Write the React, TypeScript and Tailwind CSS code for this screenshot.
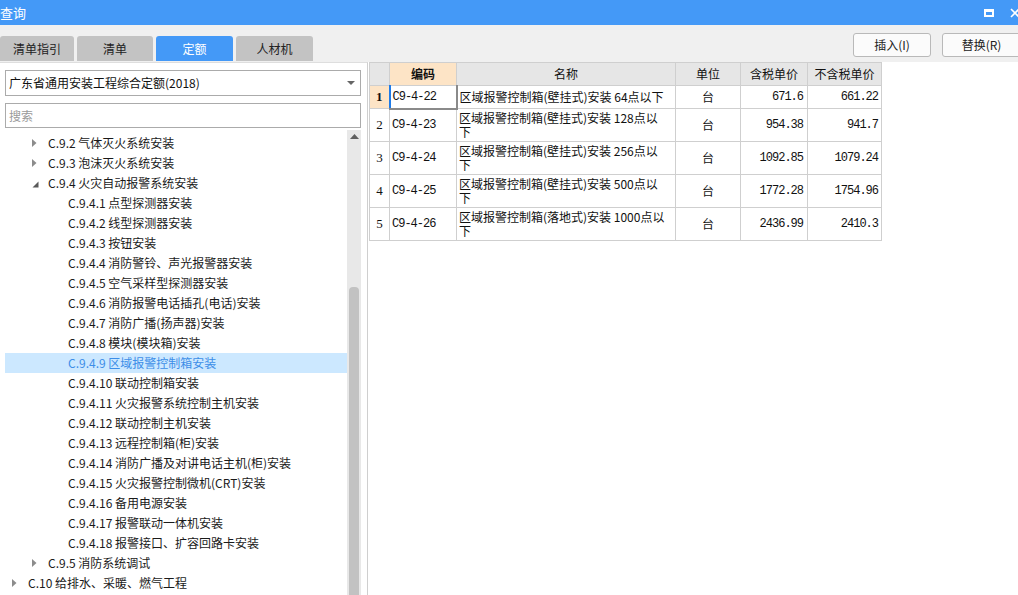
import React from "react";

const cjk = "font-['Noto_Sans_CJK_SC','Noto_Sans',sans-serif]";
const mono = "font-['Liberation_Mono','DejaVu_Sans_Mono',monospace]";

type Node = { depth: number; text: string; state?: "open" | "closed"; selected?: boolean };

const tree: Node[] = [
  { depth: 1, text: "C.9.2 气体灭火系统安装", state: "closed" },
  { depth: 1, text: "C.9.3 泡沫灭火系统安装", state: "closed" },
  { depth: 1, text: "C.9.4 火灾自动报警系统安装", state: "open" },
  { depth: 2, text: "C.9.4.1 点型探测器安装" },
  { depth: 2, text: "C.9.4.2 线型探测器安装" },
  { depth: 2, text: "C.9.4.3 按钮安装" },
  { depth: 2, text: "C.9.4.4 消防警铃、声光报警器安装" },
  { depth: 2, text: "C.9.4.5 空气采样型探测器安装" },
  { depth: 2, text: "C.9.4.6 消防报警电话插孔(电话)安装" },
  { depth: 2, text: "C.9.4.7 消防广播(扬声器)安装" },
  { depth: 2, text: "C.9.4.8 模块(模块箱)安装" },
  { depth: 2, text: "C.9.4.9 区域报警控制箱安装", selected: true },
  { depth: 2, text: "C.9.4.10 联动控制箱安装" },
  { depth: 2, text: "C.9.4.11 火灾报警系统控制主机安装" },
  { depth: 2, text: "C.9.4.12 联动控制主机安装" },
  { depth: 2, text: "C.9.4.13 远程控制箱(柜)安装" },
  { depth: 2, text: "C.9.4.14 消防广播及对讲电话主机(柜)安装" },
  { depth: 2, text: "C.9.4.15 火灾报警控制微机(CRT)安装" },
  { depth: 2, text: "C.9.4.16 备用电源安装" },
  { depth: 2, text: "C.9.4.17 报警联动一体机安装" },
  { depth: 2, text: "C.9.4.18 报警接口、扩容回路卡安装" },
  { depth: 1, text: "C.9.5 消防系统调试", state: "closed" },
  { depth: 0, text: "C.10 给排水、采暖、燃气工程", state: "closed" },
];

const rows = [
  { code: "C9-4-22", name: ["区域报警控制箱(壁挂式)安装 64点以下"], unit: "台", tax: "671.6", noTax: "661.22" },
  { code: "C9-4-23", name: ["区域报警控制箱(壁挂式)安装 128点以", "下"], unit: "台", tax: "954.38", noTax: "941.7" },
  { code: "C9-4-24", name: ["区域报警控制箱(壁挂式)安装 256点以", "下"], unit: "台", tax: "1092.85", noTax: "1079.24" },
  { code: "C9-4-25", name: ["区域报警控制箱(壁挂式)安装 500点以", "下"], unit: "台", tax: "1772.28", noTax: "1754.96" },
  { code: "C9-4-26", name: ["区域报警控制箱(落地式)安装 1000点以", "下"], unit: "台", tax: "2436.99", noTax: "2410.3" },
];

const tabs = [
  { label: "清单指引", w: "w-[74px]" },
  { label: "清单", w: "w-[76px]" },
  { label: "定额", w: "w-[77px]", active: true },
  { label: "人材机", w: "w-[77px]" },
];

function Toggle({ state }: { state?: "open" | "closed" }) {
  if (state === "closed")
    return (
      <svg width="6" height="8" viewBox="0 0 6 8" className="ml-[4px]">
        <path d="M0 0 L4.5 4 L0 8 Z" fill="#8c8c8c" />
      </svg>
    );
  if (state === "open")
    return (
      <svg width="7" height="7" viewBox="0 0 7 7" className="ml-[4px] mt-[3px]">
        <path d="M6.5 0.5 L6.5 6.5 L0.5 6.5 Z" fill="#5a5a5a" />
      </svg>
    );
  return null;
}

export default function App() {
  return (
    <div className={`flex h-[595px] w-[1018px] flex-col overflow-hidden bg-white ${cjk}`}>
      {/* title bar */}
      <div className="flex h-[25px] shrink-0 items-center justify-between bg-[#4499f7] text-white">
        <span className="text-[13px] leading-none">查询</span>
        <div className="flex items-center gap-[16px]">
          <div className="h-[8px] w-[10px] border-2 border-t-[3px] border-white" />
          <svg width="8" height="10" viewBox="0 0 8 10">
            <path d="M1 1 L9 9 M9 1 L1 9" stroke="white" strokeWidth="1.6" />
          </svg>
        </div>
      </div>

      {/* toolbar */}
      <div className="flex h-[37px] shrink-0 items-end justify-between bg-[#f0f0f0]">
        <div className="flex items-end gap-[3px] pb-[1px]">
          {tabs.map((t) => (
            <div
              key={t.label}
              className={`flex h-[25px] items-center justify-center rounded-t-[3px] text-[12px] ${t.w} ${
                t.active ? "bg-[#4499f7] text-white" : "bg-[#c3c3c3] text-[#222]"
              }`}
            >
              {t.label}
            </div>
          ))}
        </div>
        <div className="mb-[5px] mr-[-3px] flex gap-[11px] self-end">
          <button className="h-[24px] w-[78px] rounded-[3px] border border-[#b9b9b9] bg-[#fbfbfb] text-[12px] text-[#222]">
            插入(I)
          </button>
          <button className="h-[24px] w-[79px] rounded-[3px] border border-[#b9b9b9] bg-[#fbfbfb] text-[12px] text-[#222]">
            替换(R)
          </button>
        </div>
      </div>

      {/* body */}
      <div className="flex min-h-0 flex-1">
        {/* left panel */}
        <div className="flex w-[368px] shrink-0 flex-col border-r border-t border-[#cfcfcf] border-t-[#dedede] pl-[5px] pr-[6px] pt-[7px]">
          <div className="flex h-[26px] items-center justify-between border border-[#ababab] bg-white pl-[3px] pr-[5px]">
            <span className="text-[12px] text-[#111]">广东省通用安装工程综合定额(2018)</span>
            <svg width="8" height="4" viewBox="0 0 8 4">
              <path d="M0 0 L8 0 L4 4 Z" fill="#666" />
            </svg>
          </div>
          <div className="mt-[7px] flex h-[25px] items-center border border-[#ababab] bg-white pl-[3px]">
            <span className="text-[12px] text-[#9a9a9a]">搜索</span>
          </div>
          <div className="mt-[2px] flex min-h-0 flex-1">
            <div className="flex-1 pt-[3px]">
              {tree.map((n) => (
                <div
                  key={n.text}
                  className={`flex h-[20px] items-center text-[12px] ${
                    n.selected ? "bg-[#cce8ff] text-[#3d8ee8]" : "text-[#1a1a1a]"
                  }`}
                  style={{ paddingLeft: 3 + n.depth * 20 }}
                >
                  <div className="flex h-[20px] w-[20px] shrink-0 items-center">
                    <Toggle state={n.state} />
                  </div>
                  <span className="whitespace-nowrap">{n.text}</span>
                </div>
              ))}
            </div>
            {/* scrollbar */}
            <div className="flex w-[14px] flex-col items-center bg-[#e8e8e8]">
              <svg width="9" height="5" viewBox="0 0 9 5" className="mt-[4px]">
                <path d="M0 5 L4.5 0 L9 5 Z" fill="#606060" />
              </svg>
              <div className="mt-[148px] w-[10px] flex-1 rounded-t-[4px] bg-[#c2c2c2]" />
            </div>
          </div>
        </div>

        {/* right panel */}
        <div className="flex-1 pl-[1px]">
          <table className="table-fixed border-collapse text-[12px] text-[#111]">
            <colgroup>
              <col className="w-[20px]" />
              <col className="w-[67px]" />
              <col className="w-[219px]" />
              <col className="w-[65px]" />
              <col className="w-[67px]" />
              <col className="w-[74px]" />
            </colgroup>
            <thead>
              <tr className="h-[23px]">
                <th className="border border-[#cfcfcf] bg-[#e6e6e6]" />
                <th className="border border-[#cfcfcf] bg-[#fde4c6] font-bold">编码</th>
                <th className="border border-[#cfcfcf] bg-[#e6e6e6] font-normal">名称</th>
                <th className="border border-[#cfcfcf] bg-[#e6e6e6] font-normal">单位</th>
                <th className="border border-[#cfcfcf] bg-[#e6e6e6] font-normal">含税单价</th>
                <th className="border border-[#cfcfcf] bg-[#e6e6e6] font-normal">不含税单价</th>
              </tr>
            </thead>
            <tbody>
              {rows.map((r, i) => (
                <tr key={r.code} className={r.name.length > 1 ? "h-[33px]" : "h-[23px]"}>
                  <td
                    className={`border border-[#cfcfcf] text-center ${
                      i === 0 ? "bg-[#fde4c6] font-bold" : ""
                    } font-['Liberation_Serif',serif] text-[13px]`}
                  >
                    {i + 1}
                  </td>
                  <td
                    className={`border border-[#cfcfcf] px-[2px] ${mono} text-[12px] tracking-[-1px] ${
                      i === 0 ? "border-b-2 border-l-2 border-r-2 border-b-[#8a8a8a] border-l-[#1e7be9] border-r-[#8a8a8a]" : ""
                    }`}
                  >
                    {r.code}
                  </td>
                  <td className="border border-[#cfcfcf] px-[2px] leading-[14px]">
                    {r.name.map((l) => (
                      <div key={l} className="whitespace-nowrap">
                        {l}
                      </div>
                    ))}
                  </td>
                  <td className="border border-[#cfcfcf] text-center">{r.unit}</td>
                  <td className={`border border-[#cfcfcf] pr-[4px] text-right ${mono} text-[12px] tracking-[-1px]`}>
                    {r.tax}
                  </td>
                  <td className={`border border-[#cfcfcf] pr-[3px] text-right ${mono} text-[12px] tracking-[-1px]`}>
                    {r.noTax}
                  </td>
                </tr>
              ))}
            </tbody>
          </table>
        </div>
      </div>
    </div>
  );
}
